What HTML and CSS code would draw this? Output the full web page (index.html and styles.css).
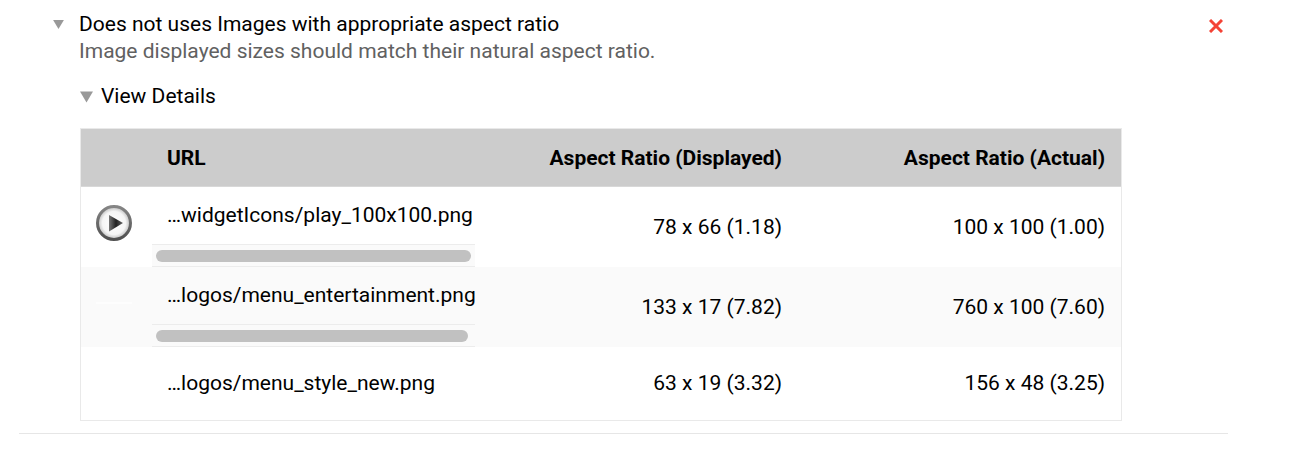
FILE: index.html
```html
<!DOCTYPE html>
<html lang="en">
<head>
<meta charset="utf-8">
<title>Audit details</title>
<link rel="stylesheet" href="styles.css">
</head>
<body>
<main class="report">
  <details class="audit" open>
    <summary class="audit-header">
      <svg class="arrow" viewBox="0 0 12 10" aria-hidden="true"><path d="M0 0H12L6 10Z"/></svg>
      <span class="audit-title">Does not uses Images with appropriate aspect ratio</span>
      <svg class="fail-icon" viewBox="0 0 14 14" role="img" aria-label="Failed"><path d="M1 1L13 13M13 1L1 13"/></svg>
    </summary>
    <div class="audit-body">
      <p class="audit-description">Image displayed sizes should match their natural aspect ratio.</p>
      <details class="view-details" open>
        <summary class="view-summary">
          <svg class="arrow arrow-large" viewBox="0 0 14 12" aria-hidden="true"><path d="M0 0H14L7 12Z"/></svg>
          <span>View Details</span>
        </summary>
        <table class="image-table">
          <colgroup><col class="col-thumb"><col><col><col></colgroup>
          <thead>
            <tr><th></th><th class="url-head">URL</th><th>Aspect Ratio (Displayed)</th><th>Aspect Ratio (Actual)</th></tr>
          </thead>
          <tbody>
            <tr>
              <td class="thumb-cell">
                <svg class="thumb" viewBox="0 0 36 36" aria-hidden="true">
                  <defs>
                    <linearGradient id="ring" x1="0" y1="0" x2="0" y2="1"><stop offset="0" stop-color="#858585"/><stop offset="1" stop-color="#505050"/></linearGradient>
                    <radialGradient id="face"><stop offset="0" stop-color="#ffffff"/><stop offset=".7" stop-color="#f5f5f5"/><stop offset="1" stop-color="#b8b8b8"/></radialGradient>
                    <linearGradient id="play" x1="0" y1="0" x2="1" y2="0"><stop offset="0" stop-color="#777777"/><stop offset=".5" stop-color="#222222"/><stop offset="1" stop-color="#666666"/></linearGradient>
                  </defs>
                  <circle cx="18" cy="18" r="16.500" fill="url(#face)" stroke="url(#ring)" stroke-width="3"/>
                  <path d="M13 10L27 18L13 26.500Z" fill="url(#play)"/>
                </svg>
              </td>
              <td class="url-cell">
                <div class="url">…widgetIcons/play_100x100.png</div>
                <div class="scroll-track"><div class="scroll-thumb" style="width:100%"></div></div>
              </td>
              <td>78 x 66 (1.18)</td>
              <td>100 x 100 (1.00)</td>
            </tr>
            <tr>
              <td class="thumb-cell"><svg class="thumb" viewBox="0 0 36 36" aria-hidden="true"><rect y="17" width="36" height="2" fill="#fdfdfd"/></svg></td>
              <td class="url-cell">
                <div class="url">…logos/menu_entertainment.png</div>
                <div class="scroll-track"><div class="scroll-thumb" style="width:99%"></div></div>
              </td>
              <td>133 x 17 (7.82)</td>
              <td>760 x 100 (7.60)</td>
            </tr>
            <tr>
              <td class="thumb-cell"></td>
              <td class="url-cell"><div class="url">…logos/menu_style_new.png</div></td>
              <td>63 x 19 (3.32)</td>
              <td>156 x 48 (3.25)</td>
            </tr>
          </tbody>
        </table>
      </details>
    </div>
  </details>
</main>
</body>
</html>
```

FILE: styles.css
```css
* {
  box-sizing: border-box;
}

body {
  margin: 0;
  background: #ffffff;
  color: #000000;
  font-family: Roboto, "Liberation Sans", sans-serif;
  font-size: 21px;
  line-height: 27px;
}

.report {
  padding: 11px 70px 0 19px;
}

.audit {
  padding-bottom: 12px;
  border-bottom: 1px solid #e6e6e6;
}

.audit-header,
.view-summary {
  display: flex;
  align-items: center;
  list-style: none;
  cursor: pointer;
}

.audit-header {
  gap: 15px;
  padding: 0 5px 0 34px;
}

.audit-title {
  flex: 1;
}

.arrow {
  flex: none;
  width: 11px;
  height: 9px;
  fill: #999999;
}

.arrow-large {
  width: 14px;
  height: 12px;
}

.fail-icon {
  flex: none;
  width: 14px;
  height: 14px;
  margin-top: 2px;
  fill: none;
  stroke: #f44336;
  stroke-width: 3;
}

.audit-body {
  padding: 0 106px 0 60px;
}

.audit-description {
  margin: 0 0 18px;
  color: #616161;
}

.view-summary {
  gap: 8px;
  margin-bottom: 18px;
}

.view-details {
  padding-left: 1px;
}

.view-summary .arrow-large {
  width: 13px;
}

.image-table {
  width: 100%;
  table-layout: fixed;
  border: 1px solid #e9e9e9;
  border-spacing: 0;
}

.col-thumb {
  width: 71px;
}

.image-table th,
.image-table td {
  padding: 15px 16px;
  text-align: right;
  vertical-align: middle;
}

.image-table th {
  padding-top: 16px;
  padding-bottom: 14px;
  border-bottom: 1px solid #d8d8d8;
  background: #cccccc;
  font-weight: 700;
}

.image-table .url-head {
  padding-left: 15px;
  text-align: left;
}

.image-table td {
  height: 73px;
}

.image-table tbody tr:nth-child(even) {
  background: #fafafa;
}

.image-table .thumb-cell {
  padding: 0 15px 8px;
}

.thumb {
  display: block;
  width: 36px;
  height: 36px;
}

.image-table .url-cell {
  padding: 0;
  text-align: left;
}

.url {
  padding: 15px;
  overflow: hidden;
  white-space: nowrap;
}

.scroll-track {
  padding: 5px 4px 4px;
  border: solid #ececec;
  border-width: 1px 0;
  background: #fafafa;
}

.scroll-thumb {
  height: 12px;
  border-radius: 6px;
  background: #c1c1c1;
}
```
